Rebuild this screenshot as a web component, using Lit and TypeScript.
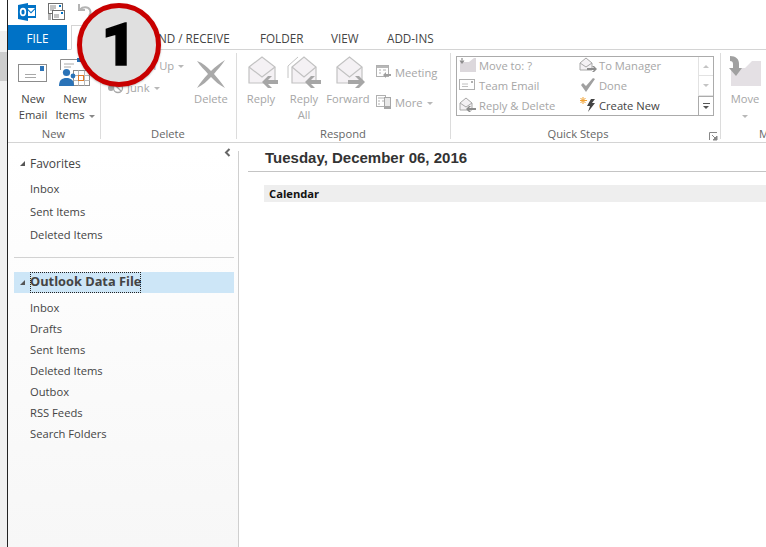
import { LitElement, html, css, svg } from 'lit';
import { customElement } from 'lit/decorators.js';

const outlookIcon = html`<svg width="18" height="18" viewBox="0 0 18 18">
  <rect x="8" y="2" width="10" height="13" fill="#0072c6"/>
  <path d="M9 5h8v8H9z" fill="#fff"/>
  <path d="M9 5l4 4 4-4v1.500l-4 4-4-4z" fill="#0072c6"/>
  <path d="M0 2l10-2v18L0 16z" fill="#0072c6"/>
  <ellipse cx="5" cy="9" rx="2.400" ry="3.400" fill="none" stroke="#fff" stroke-width="1.600"/>
</svg>`;

const qaIcon = html`<svg width="18" height="18" viewBox="0 0 18 18">
  <rect x="1.500" y="0.500" width="14" height="10" fill="#fff" stroke="#6d6d6d"/>
  <rect x="12" y="2" width="2" height="2" fill="#0072c6"/>
  <path d="M3 3h6M3 5h6M3 7h4" stroke="#888"/>
  <rect x="5.500" y="7.500" width="12" height="9" fill="#fff" stroke="#6d6d6d"/>
  <rect x="14" y="9" width="2" height="2" fill="#0072c6"/>
  <path d="M7 12h5M7 14h5" stroke="#888"/>
  <path d="M1 12h3M1 14h3M1 16h3" stroke="#6d6d6d"/>
</svg>`;

const undoIcon = html`<svg width="16" height="16" viewBox="0 0 16 16">
  <path d="M2 1v6h6" fill="none" stroke="#b4b4b4" stroke-width="2"/>
  <path d="M3 6.500c3-3 8-3 10 .5 1 2 .5 4-1 6" fill="none" stroke="#b4b4b4" stroke-width="2"/>
</svg>`;

const newEmailIcon = html`<svg width="30" height="20" viewBox="0 0 30 20">
  <rect x="0.500" y="1.500" width="28" height="17" fill="#fff" stroke="#8c8c8c"/>
  <rect x="22" y="3" width="4" height="5" fill="#2a73b8"/>
  <path d="M7 11.500h11M7 14.500h11" stroke="#a8a8a8"/>
</svg>`;

const newItemsIcon = html`<svg width="32" height="30" viewBox="0 0 32 30">
  <path d="M1.500 12V1.500h21" fill="none" stroke="#8c8c8c"/>
  <rect x="18" y="0" width="4" height="4" fill="#2a73b8"/>
  <path d="M5 6h10M5 9h7" stroke="#a8a8a8"/>
  <rect x="14.500" y="12.500" width="16" height="15" fill="#fff" stroke="#8c8c8c"/>
  <path d="M14.500 17.500h16M14.500 22.500h16M19.500 12.500v15M25.500 12.500v15" stroke="#b8b8b8"/>
  <rect x="19.500" y="17.500" width="5" height="5" fill="#fff" stroke="#e07b28"/>
  <circle cx="7.500" cy="14.500" r="3.600" fill="#2a73b8"/>
  <path d="M0 28c0-6 3-8 7.500-8s7.500 2 7.500 8z" fill="#2a73b8"/>
  <circle cx="14" cy="18" r="2.400" fill="#2a73b8"/>
</svg>`;

const deleteIcon = html`<svg width="32" height="32" viewBox="0 0 32 32">
  <path d="M2 3c6 2 10 6 14 10 4-4 9-8 14-11-3 5-8 10-11 14 4 5 8 9 11 14-6-3-10-7-14-11-4 4-8 8-14 11 3-5 7-10 11-14C10 12 5 8 2 3z" fill="#a9a9a9"/>
</svg>`;

const envelope = (x1: number, x2: number) => svg`
  <path d="M${x1} 11L${(x1 + x2) / 2} 1l${(x2 - x1) / 2} 10v16H${x1}z" fill="#f4f1f4" stroke="#c2c2c2" stroke-width="1.200"/>
  <path d="M${x1} 11l${(x2 - x1) / 2} 10 ${(x2 - x1) / 2}-10" fill="none" stroke="#c2c2c2" stroke-width="1.200"/>`;

const leftArrow = svg`<path d="M19 26l6-6h4l-4 4h10v4H25l4 4h-4z" fill="#a6a6a6"/>`;
const rightArrow = svg`<path d="M35 26l-6-6h-4l4 4H18v4h11l-4 4h4z" fill="#a6a6a6"/>`;

const replyIcon = html`<svg width="36" height="34" viewBox="0 0 36 34">${envelope(6, 32)}${leftArrow}</svg>`;
const replyAllIcon = html`<svg width="36" height="34" viewBox="0 0 36 34">
  <path d="M2 22V10L12 1" fill="none" stroke="#c4c4c4"/>${envelope(6, 30)}${leftArrow}
</svg>`;
const forwardIcon = html`<svg width="36" height="34" viewBox="0 0 36 34">${envelope(7, 32)}${rightArrow}</svg>`;

const meetingIcon = html`<svg width="16" height="16" viewBox="0 0 16 16">
  <rect x="0.500" y="1.500" width="12" height="11" fill="#fff" stroke="#b0b0b0"/>
  <rect x="1" y="2" width="11" height="2" fill="#b8b8b8"/>
  <path d="M3 6h2M7 6h3M3 9h2" stroke="#b0b0b0"/>
  <path d="M7 11l3-3v2h5v2h-5v2z" fill="#a0a0a0"/>
</svg>`;
const moreIcon = html`<svg width="16" height="16" viewBox="0 0 16 16">
  <rect x="0.500" y="1.500" width="9" height="11" fill="#fff" stroke="#b0b0b0"/>
  <path d="M2 4h6M2 7h2M6 7h2M2 10h2" stroke="#b0b0b0"/>
  <rect x="8" y="3" width="7" height="12" fill="#a6a6a6"/>
  <rect x="9" y="4" width="5" height="8" fill="#e8e8e8"/>
</svg>`;
const cleanUpIcon = html`<svg width="17" height="14" viewBox="0 0 17 14">
  <path d="M2 12l6-8 2 2-5 6z" fill="#b0b0b0"/>
</svg>`;
const junkIcon = html`<svg width="17" height="14" viewBox="0 0 17 14">
  <circle cx="4" cy="8" r="3" fill="#a8a8a8"/>
  <circle cx="11" cy="8" r="4.500" fill="#fff" stroke="#a8a8a8" stroke-width="1.300"/>
  <path d="M8 5l6 6" stroke="#a8a8a8" stroke-width="1.300"/>
</svg>`;

const moveToIcon = html`<svg width="18" height="14" viewBox="0 0 18 14">
  <path d="M1 4h9l5-4h2v14H1z" fill="#dcd8dc"/>
  <path d="M3 0v4M1 2.500L3 5l2-2.500" fill="none" stroke="#8c8c8c" stroke-width="1.200"/>
</svg>`;
const teamEmailIcon = html`<svg width="18" height="14" viewBox="0 0 18 14">
  <rect x="0.500" y="1.500" width="15" height="10" fill="#fff" stroke="#b0b0b0"/>
  <rect x="12" y="3" width="2" height="2" fill="#b0b0b0"/>
  <path d="M3 6h6M3 8.500h6" stroke="#c0c0c0"/>
</svg>`;
const smallEnvelope = (arrow: 'left' | 'right') => html`<svg width="18" height="16" viewBox="0 0 18 16">
  <path d="M1 6l6-5 6 5v7H1z" fill="#f4f1f4" stroke="#a8a8a8"/>
  <path d="M1 6l6 4 6-4" fill="none" stroke="#a8a8a8"/>
  ${arrow === 'left'
    ? svg`<path d="M7 12l3-3h2l-2 2h7v2h-7l2 2h-2z" fill="#8c8c8c"/>`
    : svg`<path d="M18 12l-3-3h-2l2 2H8v2h7l-2 2h2z" fill="#8c8c8c"/>`}
</svg>`;
const doneIcon = html`<svg width="18" height="16" viewBox="0 0 18 16">
  <path d="M2 8l2-2 3 3 7-8 2 1-9 13z" fill="#a0a0a0"/>
</svg>`;
const createNewIcon = html`<svg width="18" height="16" viewBox="0 0 18 16">
  <path d="M4 0v7M1 3.500h7M1.500 1l5 5M6.500 1l-5 5" stroke="#f0a030"/>
  <path d="M12 2h4l-3 4h3l-7 9 2-6H8z" fill="#444"/>
</svg>`;

const launcherIcon = html`<svg width="9" height="9" viewBox="0 0 9 9">
  <path d="M0.500 8V0.500H8" fill="none" stroke="#888"/>
  <path d="M3 3l4 4M8 4v4H4z" stroke="#888" fill="#888"/>
</svg>`;

const moveIcon = html`<svg width="34" height="30" viewBox="0 0 34 30">
  <path d="M3 12h14l7-7h9v25H3z" fill="#e4e0e4"/>
  <path d="M2 0c6 0 9 3 9 8v4h3l-6 8-7-8h4V8C5 6 4 5 2 5z" fill="#a0a0a0"/>
</svg>`;

const quickSteps = [
  { icon: moveToIcon, label: 'Move to: ?' },
  { icon: smallEnvelope('right'), label: 'To Manager' },
  { icon: teamEmailIcon, label: 'Team Email' },
  { icon: doneIcon, label: 'Done' },
  { icon: smallEnvelope('left'), label: 'Reply & Delete' },
  { icon: createNewIcon, label: 'Create New', active: true },
];

@customElement('app-root')
export class AppRoot extends LitElement {
  private _large(icon: unknown, lines: unknown, cls = '') {
    return html`<div class="large ${cls}">
      <div class="large__icon">${icon}</div>
      <div class="large__label">${lines}</div>
    </div>`;
  }

  render() {
    const favorites = ['Inbox', 'Sent Items', 'Deleted Items'];
    const folders = ['Inbox', 'Drafts', 'Sent Items', 'Deleted Items', 'Outbox', 'RSS Feeds', 'Search Folders'];
    return html`
      <div class="strip"><div class="strip__thumb"></div></div>
      <div class="window">
        <div class="titlebar">
          <span class="qa qa--logo">${outlookIcon}</span>
          <span class="qa qa--save">${qaIcon}</span>
          <span class="qa qa--undo">${undoIcon}</span>
        </div>
        <div class="tabs">
          <div class="tab tab--file">FILE</div>
          <div class="tab tab--home">HOME</div>
          <div class="tab tab--send">SEND / RECEIVE</div>
          <div class="tab tab--folder">FOLDER</div>
          <div class="tab tab--view">VIEW</div>
          <div class="tab tab--addins">ADD-INS</div>
        </div>

        <div class="ribbon">
          <section class="group group--new">
            <div class="group__body">
              ${this._large(newEmailIcon, html`New<br />Email`, 'on email')}
              ${this._large(newItemsIcon, html`New<br />Items <i class="caret"></i>`, 'on items')}
            </div>
            <div class="group__label">New</div>
          </section>

          <section class="group group--delete">
            <div class="group__body">
              <div class="smalls">
                <div class="small">${cleanUpIcon}<span>Clean Up <i class="caret"></i></span></div>
                <div class="small">${junkIcon}<span>Junk <i class="caret"></i></span></div>
              </div>
              ${this._large(deleteIcon, 'Delete', 'del')}
            </div>
            <div class="group__label">Delete</div>
          </section>

          <section class="group group--respond">
            <div class="group__body">
              ${this._large(replyIcon, 'Reply', 'reply')}
              ${this._large(replyAllIcon, html`Reply<br />All`, 'reply-all')}
              ${this._large(forwardIcon, 'Forward', 'forward')}
              <div class="smalls smalls--respond">
                <div class="small">${meetingIcon}<span>Meeting</span></div>
                <div class="small">${moreIcon}<span>More <i class="caret"></i></span></div>
              </div>
            </div>
            <div class="group__label">Respond</div>
          </section>

          <section class="group group--quick">
            <div class="group__body">
              <div class="qs">
                <div class="qs__grid">
                  ${quickSteps.map(
                    q => html`<div class="qs__item ${q.active ? 'qs__item--active' : ''}">
                      <span class="qs__icon">${q.icon}</span><span>${q.label}</span>
                    </div>`
                  )}
                </div>
                <div class="qs__scroll">
                  <div class="qs__btn"><i class="tri tri--up"></i></div>
                  <div class="qs__btn"><i class="tri tri--down"></i></div>
                  <div class="qs__btn qs__btn--more"><i class="more-bar"></i><i class="tri tri--dark"></i></div>
                </div>
              </div>
            </div>
            <div class="group__label group__label--quick">Quick Steps<span class="launcher">${launcherIcon}</span></div>
          </section>

          <section class="group group--move">
            <div class="group__body">
              ${this._large(moveIcon, html`Move<br /><i class="caret"></i>`, 'move')}
            </div>
            <div class="group__label group__label--clip">Move</div>
          </section>
        </div>

        <div class="content">
          <nav class="nav">
            <div class="nav__pane">
              <div class="nav__head"><i class="expander"></i>Favorites</div>
              <div class="nav__fav">
                ${favorites.map(f => html`<div class="nav__item nav__item--fav">${f}</div>`)}
              </div>
              <div class="nav__divider"></div>
              <div class="nav__selected"><i class="expander"></i><span class="nav__focus">Outlook Data File</span></div>
              <div class="nav__folders">
                ${folders.map(f => html`<div class="nav__item">${f}</div>`)}
              </div>
            </div>
            <svg class="nav__collapse" width="7" height="9" viewBox="0 0 7 9">
              <path d="M5.500 1L2 4.500 5.500 8" fill="none" stroke="#666" stroke-width="2"/>
            </svg>
          </nav>
          <main class="main">
            <div class="main__date">Tuesday, December 06, 2016</div>
            <div class="main__calendar">Calendar</div>
          </main>
        </div>
      </div>

      <div class="badge"><span>1</span></div>
    `;
  }

  static styles = css`
    :host {
      display: flex;
      position: relative;
      width: 766px;
      height: 547px;
      overflow: hidden;
      background: #fff;
      font-family: 'Open Sans', 'Noto Sans', sans-serif;
      font-size: 11.2px;
      color: #444;
    }
    svg {
      display: block;
    }

    .strip {
      flex: none;
      width: 7px;
      margin-top: 31px;
      background: #f0f0f0;
    }
    .strip__thumb {
      height: 29px;
      margin-top: 21px;
      background: #cdcdcd;
    }
    .window {
      flex: none;
      width: 759px;
      display: flex;
      flex-direction: column;
      border-left: 1px solid #222;
    }

    .titlebar {
      height: 25px;
      display: flex;
      align-items: flex-start;
      padding-top: 3px;
      box-sizing: border-box;
    }
    .qa--logo {
      margin-left: 10px;
    }
    .qa--save {
      margin-left: 11px;
    }
    .qa--undo {
      margin-left: 12px;
    }

    .tabs {
      height: 25px;
      display: flex;
      border-bottom: 1px solid #d4d4d4;
      box-sizing: border-box;
      font-size: 11.700px;
      line-height: 26px;
      color: #444;
    }
    .tab {
      white-space: nowrap;
    }
    .tab--file {
      width: 59px;
      height: 25px;
      text-align: center;
      background: #0072c6;
      color: #fff;
    }
    .tab--home {
      width: 58px;
      height: 25px;
      margin-left: 4px;
      box-sizing: border-box;
      border: 1px solid #d4d4d4;
      border-bottom-color: #fff;
      background: #fff;
      text-align: center;
    }
    .tab--send {
      width: 86px;
      margin-left: 16px;
    }
    .tab--folder {
      margin-left: 29px;
      width: 42px;
    }
    .tab--view {
      margin-left: 29px;
      width: 27px;
    }
    .tab--addins {
      margin-left: 29px;
    }

    .ribbon {
      height: 93px;
      flex: none;
      display: flex;
      border-bottom: 1px solid #d4d4d4;
      box-sizing: border-box;
      overflow: hidden;
    }
    .group {
      flex: none;
      height: 92px;
      box-sizing: border-box;
      display: flex;
      flex-direction: column;
      padding-top: 4px;
      position: relative;
    }
    .group::after {
      content: '';
      position: absolute;
      right: 0;
      top: 3px;
      bottom: 3px;
      width: 1px;
      background: #dcdcdc;
    }
    .group__body {
      flex: 1;
      display: flex;
      min-height: 0;
    }
    .group__label {
      height: 17px;
      line-height: 17px;
      padding-right: 2px;
      text-align: center;
      color: #666;
      position: relative;
    }
    .group__label--quick {
      padding-right: 16px;
    }
    .group--new {
      width: 93px;
    }
    .group--new .group__body {
      padding-left: 2px;
    }
    .group--delete {
      width: 136px;
    }
    .group--delete .group__body {
      justify-content: space-between;
    }
    .group--respond {
      width: 214px;
    }
    .group--respond .group__body {
      padding-left: 4px;
    }
    .group--quick {
      width: 270px;
    }
    .group--move {
      width: 60px;
    }
    .group--move::after {
      display: none;
    }
    .group__label--clip {
      text-align: left;
      padding-left: 38px;
    }

    .large {
      display: flex;
      flex-direction: column;
      align-items: center;
      color: #a6a6a6;
      flex: none;
      width: 44px;
    }
    .large__icon {
      height: 36px;
      padding-bottom: 1px;
      display: flex;
      align-items: flex-end;
      justify-content: center;
    }
    .large__label {
      line-height: 16px;
      text-align: center;
      white-space: nowrap;
    }
    .on {
      color: #444;
    }
    .email {
      width: 46px;
    }
    .email .large__icon {
      padding-bottom: 8px;
      height: 29px;
    }
    .items {
      width: 38px;
    }
    .items .large__icon {
      padding-bottom: 3px;
      height: 34px;
    }
    .del {
      width: 50px;
      margin-right: 1px;
    }
    .reply {
      width: 40px;
    }
    .reply-all {
      width: 44px;
      margin-left: 1px;
    }
    .move {
      width: 48px;
    }
    .move .large__icon {
      padding-bottom: 5px;
      height: 32px;
    }

    .caret {
      display: inline-block;
      vertical-align: middle;
      width: 0;
      height: 0;
      border: 3px solid transparent;
      border-top-color: #888;
      border-bottom: 0;
      margin-left: 1px;
    }
    .large:not(.on) .caret,
    .small .caret {
      border-top-color: #b8b8b8;
    }

    .smalls {
      display: flex;
      flex-direction: column;
      padding: 0 0 0 6px;
      color: #a6a6a6;
    }
    .smalls--respond {
      padding: 7px 0 0 6px;
      gap: 8px;
    }
    .small {
      display: flex;
      align-items: center;
      gap: 3px;
      height: 22px;
      white-space: nowrap;
    }

    .qs {
      display: flex;
      width: 258px;
      height: 60px;
      margin: 2px 0 0 5px;
      box-sizing: border-box;
      border: 1px solid #ababab;
    }
    .qs__grid {
      flex: 1;
      display: grid;
      grid-template-columns: 120px 1fr;
      grid-auto-rows: 20px;
      margin-top: -2px;
      padding-left: 2px;
      color: #a6a6a6;
    }
    .qs__item {
      display: flex;
      align-items: center;
      white-space: nowrap;
    }
    .qs__icon {
      width: 20px;
      flex: none;
    }
    .qs__item--active {
      color: #444;
    }
    .qs__scroll {
      flex: none;
      width: 14px;
      display: flex;
      flex-direction: column;
      border-left: 1px solid #e2e2e2;
    }
    .qs__btn {
      flex: 1;
      display: flex;
      flex-direction: column;
      align-items: center;
      justify-content: center;
      border-bottom: 1px solid #e2e2e2;
      margin-left: -1px;
    }
    .qs__btn--more {
      border: 1px solid #ababab;
      border-width: 1px 0 0 1px;
      gap: 2px;
    }
    .tri {
      width: 0;
      height: 0;
      border: 3px solid transparent;
      border-top-width: 0;
      border-bottom-color: #c4c4c4;
    }
    .tri--down {
      border-top: 3px solid #c4c4c4;
      border-bottom: 0;
    }
    .tri--dark {
      border-top: 3px solid #555;
      border-bottom: 0;
    }
    .more-bar {
      width: 7px;
      height: 1px;
      background: #555;
    }

    .launcher {
      position: absolute;
      right: 3px;
      top: 7px;
    }

    .content {
      flex: 1;
      display: flex;
      min-height: 0;
    }
    .nav {
      flex: none;
      width: 231px;
      padding-top: 8px;
      position: relative;
      box-sizing: border-box;
      background: #fff;
    }
    .nav__pane {
      height: 100%;
      box-sizing: border-box;
      border-right: 1px solid #cfcfcf;
      padding: 0 4px 0 6px;
      background: linear-gradient(#fff, #f7f7f7);
    }
    .nav__collapse {
      position: absolute;
      left: 216px;
      top: 5px;
    }
    .nav__head {
      height: 24px;
      display: flex;
      align-items: center;
      font-size: 12px;
    }
    .expander {
      width: 0;
      height: 0;
      border-style: solid;
      border-width: 0 0 5px 5px;
      border-color: transparent transparent #555 transparent;
      margin: 0 5px 0 6px;
      flex: none;
    }
    .nav__fav {
      margin-top: 2px;
    }
    .nav__item {
      height: 21px;
      line-height: 21px;
      padding-left: 16px;
      white-space: nowrap;
    }
    .nav__item--fav {
      height: 23px;
      line-height: 23px;
    }
    .nav__divider {
      height: 1px;
      background: #d2d2d2;
      margin-top: 11px;
    }
    .nav__selected {
      height: 21px;
      margin-top: 14px;
      display: flex;
      align-items: center;
      background: #cde6f7;
      font-weight: 700;
      font-size: 12.800px;
    }
    .nav__focus {
      height: 21px;
      line-height: 19px;
      box-sizing: border-box;
      outline: 1px dotted #222;
      outline-offset: -1px;
    }
    .nav__folders {
      margin-top: 4px;
    }

    .main {
      flex: 1;
      min-width: 0;
      padding-left: 9px;
    }
    .main__date {
      height: 28px;
      line-height: 30px;
      padding-left: 17px;
      border-bottom: 1px solid #c4c4c4;
      font-family: 'Liberation Sans', Arial, sans-serif;
      font-size: 15px;
      font-weight: 700;
      color: #333;
    }
    .main__calendar {
      margin: 13px 0 0 16px;
      height: 17px;
      line-height: 17px;
      padding-left: 5px;
      background: #eee;
      font-weight: 700;
      font-size: 11.200px;
      color: #111;
    }

    .badge {
      position: absolute;
      left: 77px;
      top: 3px;
      width: 84px;
      height: 84px;
      box-sizing: border-box;
      border: 5px solid #c80000;
      border-radius: 50%;
      background: #e0e0e0;
      display: flex;
      align-items: center;
      justify-content: center;
      font-family: Roboto, 'Open Sans', sans-serif;
      font-weight: 900;
      font-size: 60px;
      line-height: 1;
      color: #000;
      -webkit-text-stroke: 1.500px #000;
      box-shadow: 0 1px 2px rgba(0, 0, 0, 0.25);
    }
  `;
}

declare global {
  interface HTMLElementTagNameMap {
    'app-root': AppRoot;
  }
}
